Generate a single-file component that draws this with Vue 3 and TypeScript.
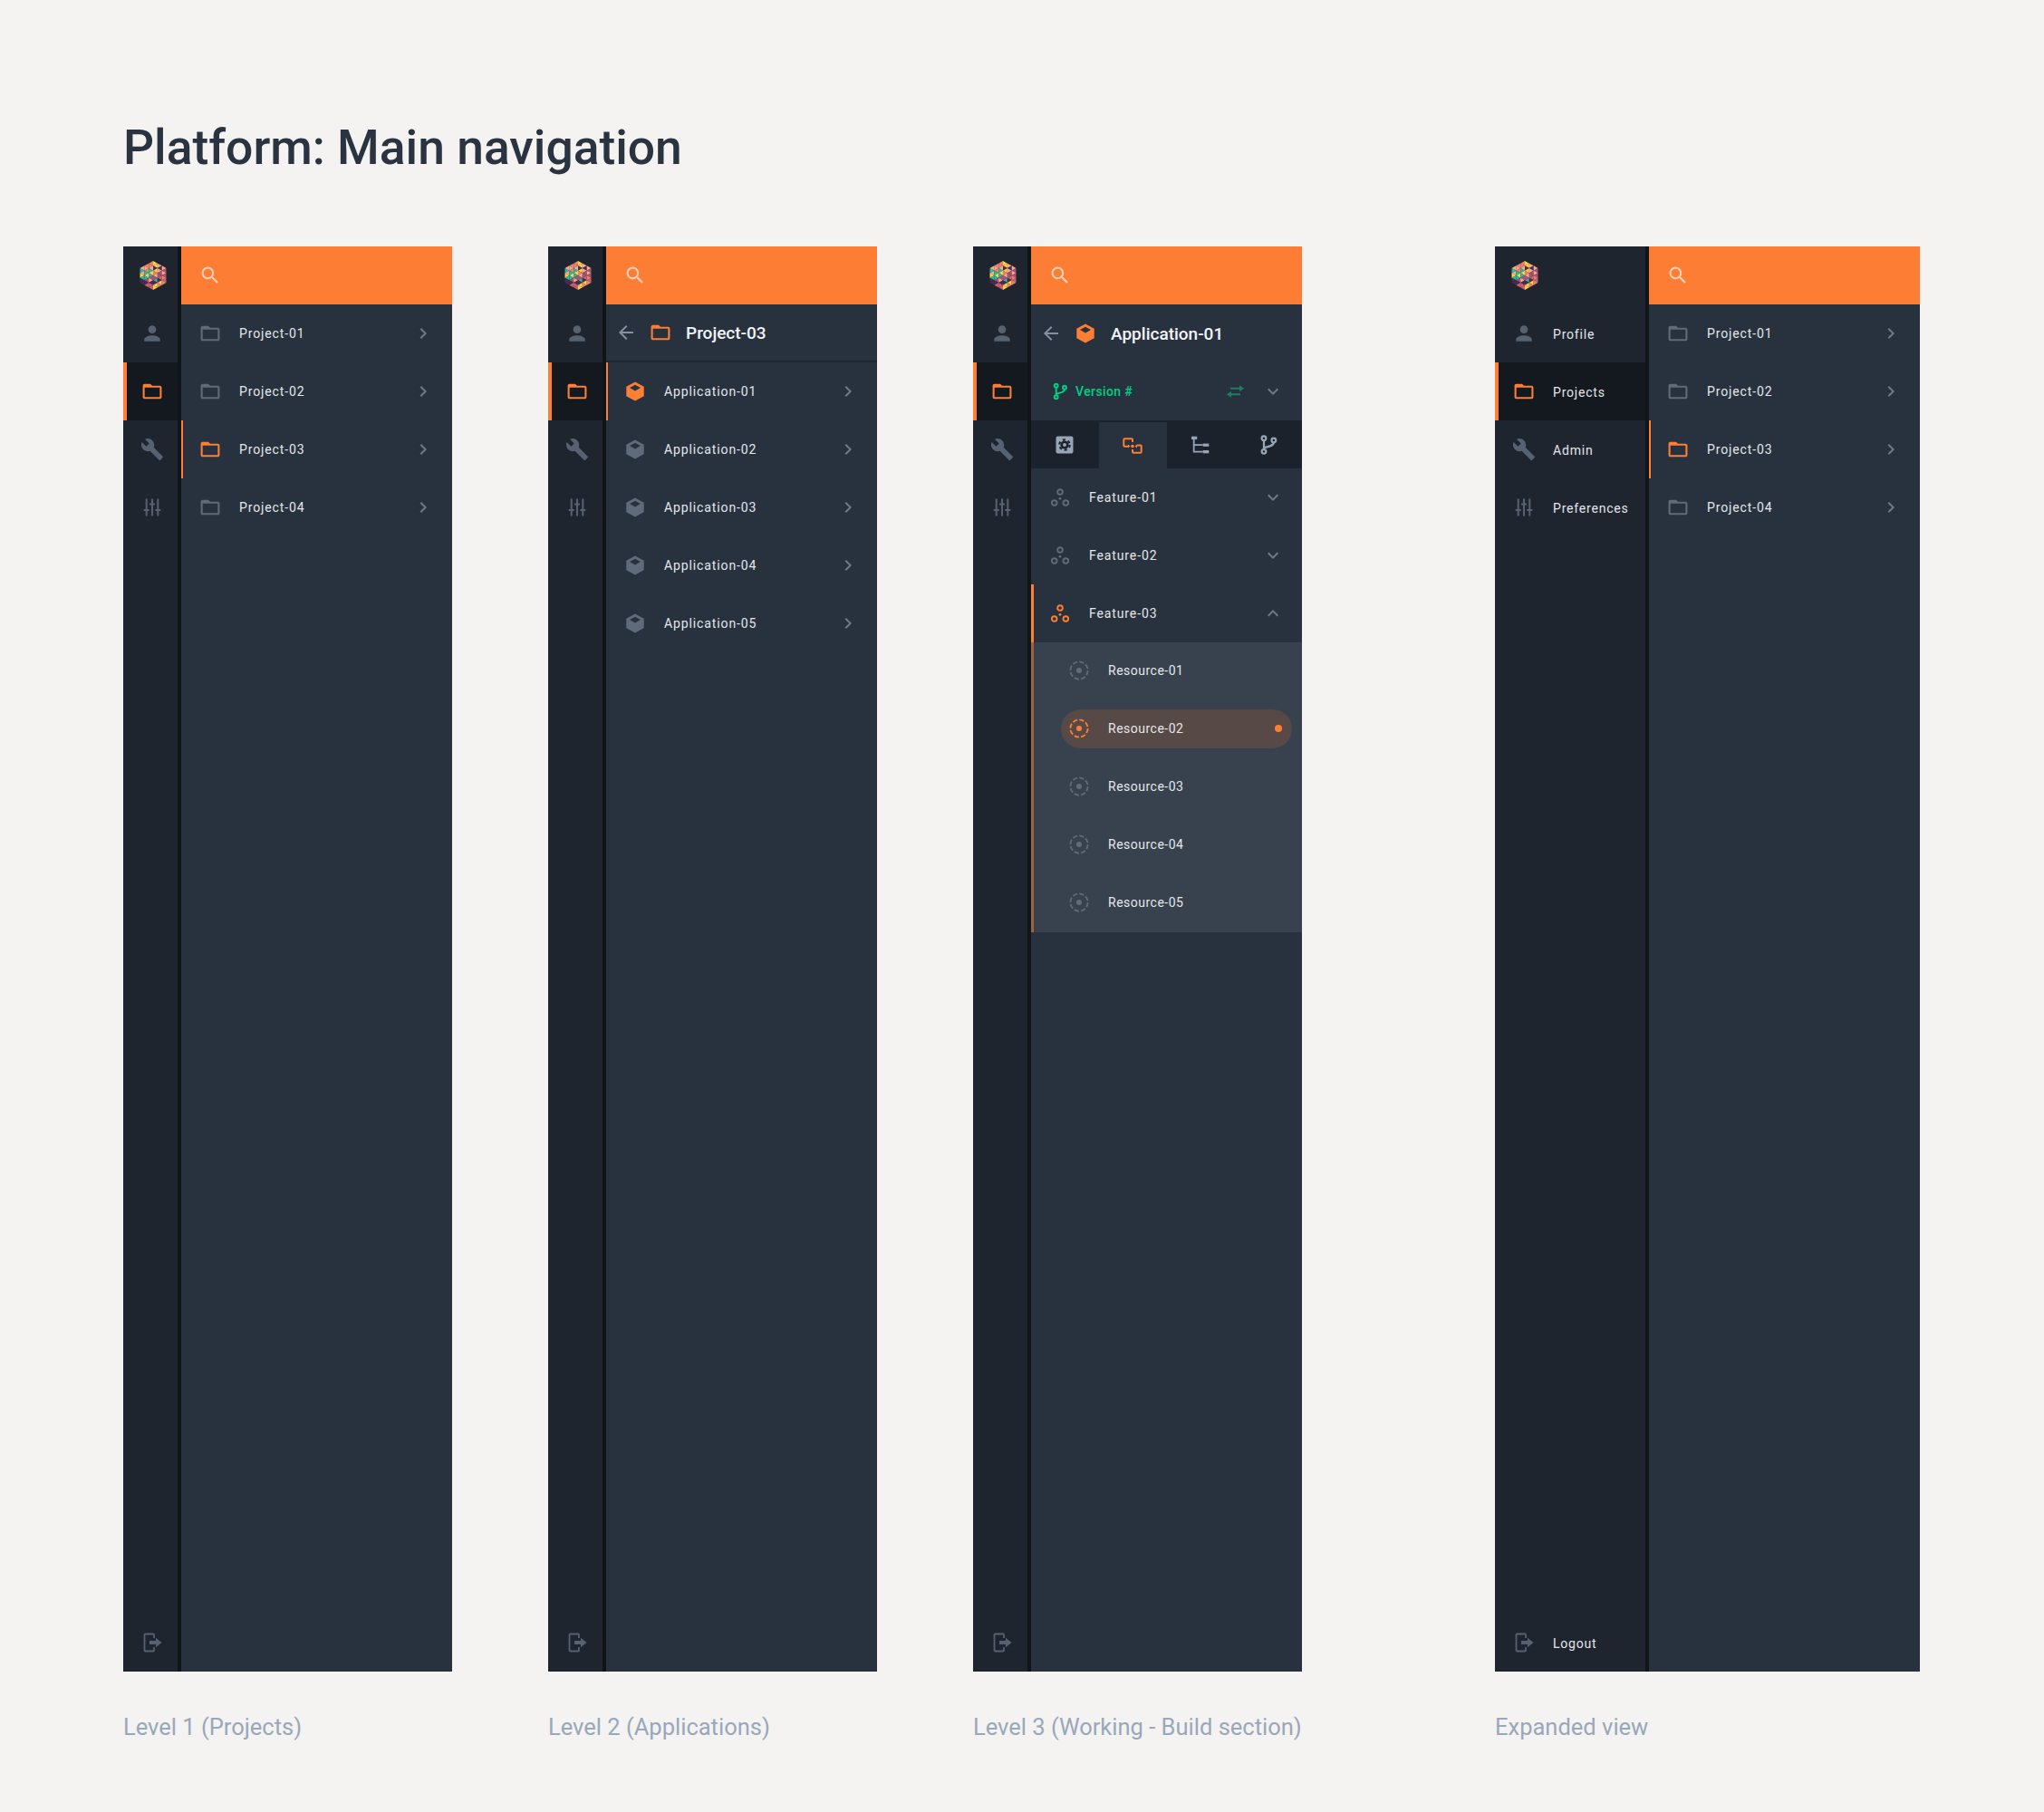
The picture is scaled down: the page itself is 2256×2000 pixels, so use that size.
<script setup lang="ts">
type Row = { name: string; active?: boolean };

interface Screen {
  caption: string;
  level: 1 | 2 | 3;
  expanded?: boolean;
}

const screens: Screen[] = [
  { caption: 'Level 1 (Projects)', level: 1 },
  { caption: 'Level 2 (Applications)', level: 2 },
  { caption: 'Level 3 (Working - Build section)', level: 3 },
  { caption: 'Expanded view', level: 1, expanded: true },
];

const railItems = [
  { icon: 'person', label: 'Profile' },
  { icon: 'folder', label: 'Projects', active: true },
  { icon: 'wrench', label: 'Admin' },
  { icon: 'tune', label: 'Preferences' },
];

const projects: Row[] = [
  { name: 'Project-01' },
  { name: 'Project-02' },
  { name: 'Project-03', active: true },
  { name: 'Project-04' },
];

const applications: Row[] = [
  { name: 'Application-01', active: true },
  { name: 'Application-02' },
  { name: 'Application-03' },
  { name: 'Application-04' },
  { name: 'Application-05' },
];

const features: Row[] = [
  { name: 'Feature-01' },
  { name: 'Feature-02' },
  { name: 'Feature-03', active: true },
];

const resources: Row[] = [
  { name: 'Resource-01' },
  { name: 'Resource-02', active: true },
  { name: 'Resource-03' },
  { name: 'Resource-04' },
  { name: 'Resource-05' },
];

const tabs = [
  { icon: 'tab-gear', active: false },
  { icon: 'tab-flow', active: true },
  { icon: 'tab-tree', active: false },
  { icon: 'branch', active: false },
];

// logo: hexagon built from a triangular grid, one colour string per column
const palette: Record<string, string> = {
  s: '#f0806c',
  p: '#f5ab8c',
  t: '#2bb8a4',
  y: '#f8d248',
  d: '#4d2a50',
  m: '#a85274',
  r: '#cc5f70',
};
const logoColumns = ['ptpytdd', 'spstytmdr', 'ssptytmpdrr', 'yydyspmtdyy', 'pdpmmrdys', 'pmpmsrs'];

const logoTriangles = (() => {
  const s = 5.33;
  const w = 4.83;
  const out: { points: string; fill: string }[] = [];
  const line = (k: number) => {
    const segs = 6 - Math.abs(k);
    return Array.from({ length: segs + 1 }, (_, i) => [k * w, (i - segs / 2) * s]);
  };
  for (let c = 0; c < 6; c++) {
    const L = line(c - 3);
    const R = line(c - 2);
    const leftShort = L.length < R.length;
    const colours = logoColumns[c];
    for (let i = 0; i < colours.length; i++) {
      const n = Math.floor(i / 2);
      let tri: number[][];
      if (leftShort) {
        tri = i % 2 === 0 ? [R[n], L[n], R[n + 1]] : [L[n], L[n + 1], R[n + 1]];
      } else {
        tri = i % 2 === 0 ? [L[n], R[n], L[n + 1]] : [R[n], R[n + 1], L[n + 1]];
      }
      out.push({ points: tri.map((p) => p.map((v) => v.toFixed(2)).join(',')).join(' '), fill: palette[colours[i]] });
    }
  }
  return out;
})();
</script>

<template>
  <div class="page">
    <!-- icon sprite -->
    <svg class="sprite" aria-hidden="true">
      <defs>
        <symbol id="logo" viewBox="-15 -16 30 32">
          <polygon v-for="(t, i) in logoTriangles" :key="i" :points="t.points" :fill="t.fill" />
        </symbol>
        <symbol id="search" viewBox="0.5 0.5 23 23">
          <path fill="currentColor" d="M15.5 14h-.79l-.28-.27C15.41 12.59 16 11.11 16 9.5 16 5.91 13.09 3 9.5 3S3 5.91 3 9.5 5.91 16 9.5 16c1.61 0 3.09-.59 4.23-1.57l.27.28v.79l5 4.99L20.49 19l-4.99-5zm-6 0C7.01 14 5 11.99 5 9.5S7.01 5 9.5 5 14 7.01 14 9.5 11.99 14 9.5 14z" />
        </symbol>
        <symbol id="person" viewBox="1 1 22 22">
          <path fill="currentColor" d="M12 12c2.21 0 4-1.79 4-4s-1.79-4-4-4-4 1.79-4 4 1.79 4 4 4zm0 2c-2.67 0-8 1.34-8 4v2h16v-2c0-2.66-5.33-4-8-4z" />
        </symbol>
        <symbol id="folder" viewBox="0.5 0.5 23 23">
          <path fill="currentColor" d="M20 6h-8l-2-2H4c-1.1 0-1.99.9-1.99 2L2 18c0 1.1.9 2 2 2h16c1.1 0 2-.9 2-2V8c0-1.1-.9-2-2-2zm0 12H4V8h16v10z" />
        </symbol>
        <symbol id="wrench" viewBox="1 1 22 22">
          <path fill="currentColor" d="M22.7 19l-9.1-9.1c.9-2.3.4-5-1.5-6.9-2-2-5-2.4-7.4-1.3L9 6 6 9 1.6 4.7C.4 7.1.9 10.1 2.9 12.1c1.9 1.9 4.6 2.4 6.9 1.5l9.1 9.1c.4.4 1 .4 1.4 0l2.3-2.3c.5-.4.5-1.1.1-1.4z" />
        </symbol>
        <symbol id="tune" viewBox="0 0 24 24">
          <path fill="none" stroke="currentColor" stroke-width="2" d="M5.7 2.5v19M12 2.5v19M18.3 2.5v19M2.7 15h6M9 8.5h6M15.3 15h6" />
        </symbol>
        <symbol id="logout" viewBox="0 0 24 24">
          <path fill="none" stroke="currentColor" stroke-width="1.8" d="M14 7V3.5a1 1 0 0 0-1-1H4.5a1 1 0 0 0-1 1v17a1 1 0 0 0 1 1H13a1 1 0 0 0 1-1V17" />
          <path fill="currentColor" d="M9 10h7V6.8l6.5 5.2-6.5 5.2V14H9z" />
        </symbol>
        <symbol id="chevron-right" viewBox="0 0 24 24">
          <path fill="currentColor" d="M10 6L8.59 7.41 13.17 12l-4.58 4.59L10 18l6-6z" />
        </symbol>
        <symbol id="chevron-down" viewBox="0 0 24 24">
          <path fill="currentColor" d="M16.59 8.59L12 13.17 7.41 8.59 6 10l6 6 6-6z" />
        </symbol>
        <symbol id="chevron-up" viewBox="0 0 24 24">
          <path fill="currentColor" d="M12 8l-6 6 1.41 1.41L12 10.83l4.59 4.58L18 14z" />
        </symbol>
        <symbol id="arrow-back" viewBox="0 0 24 24">
          <path fill="currentColor" d="M20 11H7.83l5.59-5.59L12 4l-8 8 8 8 1.41-1.41L7.83 13H20v-2z" />
        </symbol>
        <symbol id="cube" viewBox="0 0 24 24">
          <path fill="currentColor" d="M12 1.5l9.7 5.3v10.4L12 22.5l-9.7-5.3V6.800z" />
          <path fill="#28323e" d="M12 4.700l6 3.200-6 3.500-6-3.500z" />
        </symbol>
        <symbol id="feature" viewBox="0 0 24 24">
          <g fill="none" stroke="currentColor" stroke-width="1.9">
            <circle cx="12" cy="6" r="2.8" />
            <circle cx="5.7" cy="18" r="2.8" />
            <circle cx="18.3" cy="18" r="2.8" />
          </g>
          <circle cx="12" cy="13.3" r="1.4" fill="currentColor" />
        </symbol>
        <symbol id="resource" viewBox="0 0 24 24">
          <circle cx="12" cy="12" r="9.6" fill="none" stroke="currentColor" stroke-width="1.8" stroke-dasharray="5.3 2.24" />
          <circle cx="12" cy="12" r="3" fill="currentColor" />
        </symbol>
        <symbol id="branch" viewBox="0 0 24 24">
          <g fill="none" stroke="currentColor" stroke-width="1.9">
            <circle cx="7.7" cy="5.7" r="2" />
            <circle cx="7.7" cy="18.3" r="2" />
            <circle cx="17" cy="7.7" r="2" />
            <path d="M7.7 7.700v8.600M17 9.700c0 2.800-3.200 3.700-9.300 5" />
          </g>
        </symbol>
        <symbol id="swap" viewBox="0 0 24 24">
          <path fill="none" stroke="currentColor" stroke-width="2" d="M7 8.700h10.500M18 15.300H7.500" />
          <path fill="currentColor" d="M17 5.200l5 3.500-5 3.500zM8 11.800l-5 3.500 5 3.500z" />
        </symbol>
        <symbol id="tab-gear" viewBox="0 0 24 24">
          <rect x="2.5" y="2.5" width="19" height="19" rx="2" fill="currentColor" />
          <circle cx="12" cy="12" r="4.6" fill="#1c222c" />
          <circle cx="12" cy="12" r="5.7" fill="none" stroke="#1c222c" stroke-width="2.2" stroke-dasharray="3 3" />
          <circle cx="12" cy="12" r="2" fill="currentColor" />
        </symbol>
        <symbol id="tab-flow" viewBox="0 0 24 24">
          <g fill="none" stroke="currentColor" stroke-width="2">
            <path d="M12 8V5.300a1 1 0 0 0-1-1H3.300a1 1 0 0 0-1 1v6.400a1 1 0 0 0 1 1H7" />
            <path d="M12 16v2.800a1 1 0 0 0 1 1h7.700a1 1 0 0 0 1-1v-6.400a1 1 0 0 0-1-1H17" />
          </g>
          <circle cx="12" cy="12.500" r="1.8" fill="currentColor" />
          <path fill="currentColor" d="M7 10.500l2.500 2-2.500 2zM17 10.500l-2.500 2 2.500 2z" />
        </symbol>
        <symbol id="tab-tree" viewBox="0 0 24 24">
          <g fill="currentColor">
            <rect x="2" y="2.7" width="6.2" height="3.3" />
            <rect x="14.7" y="10.6" width="6.6" height="3.2" />
            <rect x="14.7" y="18" width="6.6" height="3.3" />
          </g>
          <path fill="none" stroke="currentColor" stroke-width="1.8" d="M4.700 6v13.600h10M4.700 12.200h10" />
        </symbol>
      </defs>
    </svg>

    <h1 class="title">Platform: Main navigation</h1>

    <div class="screens">
      <section v-for="screen in screens" :key="screen.caption" class="screen" :class="{ wide: screen.expanded }">
        <div class="frame">
          <!-- left rail -->
          <nav class="rail" :class="{ expanded: screen.expanded }">
            <div class="rail-item">
              <span class="slot"><svg class="logo"><use href="#logo" /></svg></span>
            </div>
            <div v-for="item in railItems" :key="item.label" class="rail-item" :class="{ active: item.active }">
              <span class="slot">
                <svg class="ico"><use :href="'#' + item.icon" /></svg>
              </span>
              <span v-if="screen.expanded" class="rail-label">{{ item.label }}</span>
            </div>
            <div class="rail-item logout">
              <span class="slot"><svg class="ico"><use href="#logout" /></svg></span>
              <span v-if="screen.expanded" class="rail-label">Logout</span>
            </div>
          </nav>

          <div class="content">
            <div class="search">
              <span class="slot"><svg class="ico"><use href="#search" /></svg></span>
            </div>

            <!-- level 1 -->
            <template v-if="screen.level === 1">
              <div v-for="p in projects" :key="p.name" class="row" :class="{ selected: p.active }">
                <span class="slot"><svg class="ico lead"><use href="#folder" /></svg></span>
                <span class="row-name">{{ p.name }}</span>
                <span class="slot"><svg class="ico chev"><use href="#chevron-right" /></svg></span>
              </div>
            </template>

            <!-- level 2 -->
            <template v-else-if="screen.level === 2">
              <div class="head with-line">
                <svg class="ico back"><use href="#arrow-back" /></svg>
                <svg class="ico head-ico"><use href="#folder" /></svg>
                <span class="head-name">Project-03</span>
              </div>
              <div v-for="a in applications" :key="a.name" class="row" :class="{ selected: a.active }">
                <span class="slot"><svg class="ico lead"><use href="#cube" /></svg></span>
                <span class="row-name">{{ a.name }}</span>
                <span class="slot"><svg class="ico chev"><use href="#chevron-right" /></svg></span>
              </div>
            </template>

            <!-- level 3 -->
            <template v-else>
              <div class="head">
                <svg class="ico back"><use href="#arrow-back" /></svg>
                <svg class="ico head-ico"><use href="#cube" /></svg>
                <span class="head-name">Application-01</span>
              </div>
              <div class="version">
                <span class="slot version-slot"><svg class="ico"><use href="#branch" /></svg></span>
                <span class="version-name">Version #</span>
                <svg class="ico swap"><use href="#swap" /></svg>
                <span class="slot"><svg class="ico chev"><use href="#chevron-down" /></svg></span>
              </div>
              <div class="tabs">
                <div v-for="t in tabs" :key="t.icon" class="tab" :class="{ active: t.active }">
                  <svg class="ico" :class="{ big: t.icon === 'branch' }"><use :href="'#' + t.icon" /></svg>
                </div>
              </div>
              <div v-for="f in features" :key="f.name" class="row" :class="{ selected: f.active, opened: f.active }">
                <span class="slot"><svg class="ico lead"><use href="#feature" /></svg></span>
                <span class="row-name">{{ f.name }}</span>
                <span class="slot"><svg class="ico chev"><use :href="f.active ? '#chevron-up' : '#chevron-down'" /></svg></span>
              </div>
              <div class="subs">
                <div v-for="r in resources" :key="r.name" class="sub" :class="{ current: r.active }">
                  <div class="sub-body">
                    <svg class="ico resource"><use href="#resource" /></svg>
                    <span class="sub-name">{{ r.name }}</span>
                    <i v-if="r.active" class="dot"></i>
                  </div>
                </div>
              </div>
            </template>
          </div>
        </div>
        <p class="caption">{{ screen.caption }}</p>
      </section>
    </div>
  </div>
</template>

<style>
body {
  background: #f4f3f2;
}
</style>

<style scoped>
.page {
  min-height: 2000px;
  padding: 133px 0 0 136px;
  box-sizing: border-box;
  background: #f4f3f2;
  font-family: Roboto, "Liberation Sans", sans-serif;
}
.sprite {
  position: absolute;
  width: 0;
  height: 0;
}
.title {
  margin: 0 0 79px;
  font-size: 53.4px;
  line-height: 60px;
  font-weight: 500;
  color: #2a3441;
}
.screens {
  display: flex;
  gap: 106px;
}
.screen {
  width: 363px;
}
.screen.wide {
  width: 469px;
  margin-left: 107px;
}
.frame {
  display: flex;
  height: 1573px;
  background: #28323e;
}
.caption {
  margin: 43px 0 0;
  font-size: 25.5px;
  line-height: 36px;
  color: #98a8bb;
  white-space: nowrap;
}

.ico {
  width: 24px;
  height: 24px;
  flex-shrink: 0;
}
.slot {
  display: flex;
  align-items: center;
  justify-content: center;
  flex-shrink: 0;
  width: 64px;
  height: 100%;
}

/* rail */
.rail {
  display: flex;
  flex-direction: column;
  flex-shrink: 0;
  box-sizing: border-box;
  width: 64px;
  height: 100%;
  background: #1e252f;
  border-right: 4px solid #11151a;
  color: #566272;
}
.rail.expanded {
  width: 170px;
}
.rail-item {
  position: relative;
  display: flex;
  align-items: center;
  height: 64px;
}
.rail-item.active {
  background: #14181f;
  color: #fd7e35;
}
.rail-item.active::before {
  content: "";
  position: absolute;
  left: 0;
  top: 0;
  bottom: 0;
  width: 4px;
  background: #fd7e35;
}
.rail-item.logout {
  margin-top: auto;
}
.logo {
  width: 30px;
  height: 32px;
  margin-left: 1px;
}
.rail-label {
  padding-top: 2px;
  font-size: 14px;
  letter-spacing: 0.8px;
  color: #e4e7ea;
  white-space: nowrap;
}

/* right side */
.content {
  flex: 1;
  min-width: 0;
  display: flex;
  flex-direction: column;
  color: #5f6b7a;
}
.search {
  display: flex;
  align-items: center;
  height: 64px;
  flex-shrink: 0;
  background: #fd7d34;
  color: #fed2b6;
}
.row {
  position: relative;
  display: flex;
  align-items: center;
  height: 64px;
  flex-shrink: 0;
}
.row-name {
  flex: 1;
  font-size: 14px;
  letter-spacing: 0.88px;
  color: #e4e7ea;
}
.row.selected::before {
  content: "";
  position: absolute;
  left: 0;
  top: 0;
  bottom: 0;
  width: 2px;
  background: #fd7e35;
}
.row.opened::before {
  width: 3px;
}
.row.selected .lead,
.head-ico {
  color: #fd7e35;
}
.ico.chev {
  color: #6f7a87;
}

.head {
  display: flex;
  align-items: center;
  box-sizing: border-box;
  height: 64px;
  flex-shrink: 0;
  padding-left: 10px;
}
.head.with-line {
  border-bottom: 2px solid #1e262f;
}
.back {
  color: #8491a2;
}
.head-ico {
  margin-left: 14px;
}
.head-name {
  margin-left: 16px;
  font-size: 19px;
  font-weight: 500;
  color: #f2f4f6;
}

.version {
  display: flex;
  align-items: center;
  height: 64px;
  flex-shrink: 0;
  color: #00d080;
}
.version-slot {
  width: 49px;
  padding-left: 20px;
  box-sizing: border-box;
  justify-content: flex-start;
}
.version-name {
  flex: 1;
  font-size: 14px;
  font-weight: 500;
  letter-spacing: 0.4px;
}
.swap {
  margin-right: -2px;
  color: #1b7f5c;
}

.tabs {
  display: flex;
  height: 53px;
  flex-shrink: 0;
  background: #1c222c;
}
.tab {
  flex: 1;
  display: flex;
  align-items: center;
  justify-content: center;
  color: #98a5b6;
}
.tab.active {
  margin-top: 2px;
  background: #28323e;
  color: #fd7e35;
}
.ico.big {
  width: 28px;
  height: 28px;
}

.subs {
  position: relative;
  flex-shrink: 0;
  background: #38424f;
}
.subs::before {
  content: "";
  position: absolute;
  left: 0;
  top: 0;
  bottom: 0;
  width: 3px;
  background: #9e6241;
}
.sub {
  display: flex;
  align-items: center;
  height: 64px;
  padding: 0 11px 2px 33px;
  box-sizing: border-box;
}
.sub-body {
  flex: 1;
  display: flex;
  align-items: center;
  height: 43px;
  border-radius: 22px;
  padding: 0 11px 0 8px;
}
.sub.current .sub-body {
  background: #564946;
}
.sub-name {
  flex: 1;
  margin-left: 20px;
  font-size: 14px;
  letter-spacing: 0.5px;
  color: #e4e7ea;
}
.ico.resource {
  color: #5f6b7a;
}
.sub.current .ico.resource {
  color: #fd7e35;
}
.dot {
  width: 8px;
  height: 8px;
  border-radius: 50%;
  background: #fd7e35;
}
</style>
